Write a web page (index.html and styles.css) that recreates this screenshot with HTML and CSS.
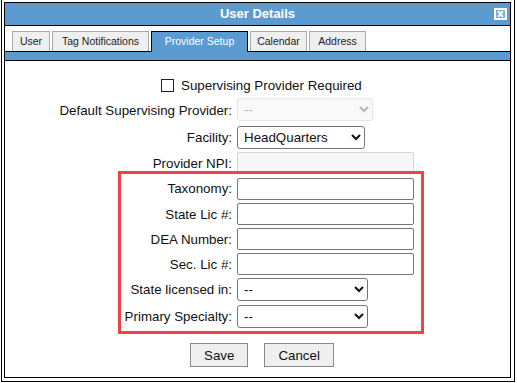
FILE: index.html
```html
<!DOCTYPE html>
<html lang="en">
<head>
    <meta charset="UTF-8">
    <title>User Details</title>
    <link rel="stylesheet" href="styles.css">
</head>
<body>
    <div class="frame">
        <div class="dialog">
            <div class="title-bar">
                <span class="title">User Details</span>
                <span class="close-btn">
                    <svg width="13" height="12" viewBox="0 0 13 12">
                        <rect x="1" y="1" width="11" height="10" fill="#7eb0dc" stroke="#fff" stroke-width="2"/>
                        <path d="M4.2 3.2 L8.8 8.8 M8.8 3.2 L4.2 8.8" stroke="#fff" stroke-width="2"/>
                    </svg>
                </span>
            </div>

            <ul class="tabs">
                <li class="tab tab-user">User</li>
                <li class="tab tab-wide">Tag Notifications</li>
                <li class="tab tab-wide active">Provider Setup</li>
                <li class="tab tab-mid">Calendar</li>
                <li class="tab tab-mid">Address</li>
            </ul>
            <div class="tab-strip"></div>

            <div class="panel">
                <form class="provider-form">
                    <label class="check-row">
                        <input type="checkbox" class="check">
                        <span>Supervising Provider Required</span>
                    </label>

                    <label class="field-label">Default Supervising Provider:</label>
                    <select class="control sel-default" disabled>
                        <option>--</option>
                    </select>

                    <label class="field-label">Facility:</label>
                    <select class="control sel-facility">
                        <option>HeadQuarters</option>
                    </select>

                    <label class="field-label">Provider NPI:</label>
                    <input type="text" class="control text-input" disabled>

                    <label class="field-label">Taxonomy:</label>
                    <input type="text" class="control text-input row-tax">

                    <label class="field-label">State Lic #:</label>
                    <input type="text" class="control text-input">

                    <label class="field-label">DEA Number:</label>
                    <input type="text" class="control text-input">

                    <label class="field-label">Sec. Lic #:</label>
                    <input type="text" class="control text-input">

                    <label class="field-label">State licensed in:</label>
                    <select class="control sel-short">
                        <option>--</option>
                    </select>

                    <label class="field-label">Primary Specialty:</label>
                    <select class="control sel-short sel-last">
                        <option>--</option>
                    </select>

                    <div class="actions">
                        <button type="button" class="btn">Save</button>
                        <button type="button" class="btn">Cancel</button>
                    </div>
                </form>
            </div>

            <!-- highlight drawn over the licence fields -->
            <div class="highlight"></div>
        </div>
    </div>
</body>
</html>
```

FILE: styles.css
```css
body {
    margin: 0;
    background-color: #fff;
    font-family: "Liberation Sans", Arial, sans-serif;
}
.frame {
    width: 507px;
    margin-left: 1px;
    padding: 2px 3px 3px 2px;
    border: 1px solid #000;
    border-top: none;
}
.dialog {
    position: relative;
    height: 374px;
    border: 1px solid #000;
    background-color: #fff;
}
.title-bar {
    position: relative;
    height: 22px;
    background-color: #5b9bd0;
    border-bottom: 1px solid #000;
    text-align: center;
}
.title {
    color: #fff;
    font-size: 13px;
    font-weight: bold;
    line-height: 22px;
}
.close-btn {
    position: absolute;
    right: 3px;
    top: 5px;
    line-height: 0;
}
.tabs {
    display: flex;
    gap: 2px;
    list-style: none;
    margin: 0;
    padding: 5px 0 0 7px;
    border-bottom: 1px solid #000;
}
.tab {
    box-sizing: border-box;
    height: 20px;
    border: 1px solid #aaa;
    border-bottom: none;
    background-color: #efefef;
    color: #222;
    font-size: 10.5px;
    line-height: 19px;
    text-align: center;
}
.tab-user {
    width: 38px;
}
.tab-wide {
    width: 97px;
}
.tab-mid {
    width: 57px;
}
.tab.active {
    height: 21px;
    margin-bottom: -1px;
    border-color: #000;
    background-color: #5b9bd0;
    color: #fff;
}
.tab-strip {
    height: 8px;
    background-color: #5b9bd0;
    border-bottom: 1px solid #000;
}
.panel {
    padding-top: 17px;
}
.provider-form {
    display: grid;
    grid-template-columns: 227px 177px;
    column-gap: 5px;
    row-gap: 3px;
    align-items: center;
    font-size: 13.33px;
    color: #111;
}
.check-row {
    grid-column: 1 / 3;
    display: flex;
    align-items: center;
    gap: 7px;
    height: 15px;
    margin: 0 0 2px 156px;
}
.check {
    appearance: none;
    width: 13px;
    height: 13px;
    margin: 0;
    border: 1px solid #222;
    background-color: #fff;
}
.field-label {
    text-align: right;
}
.control {
    box-sizing: border-box;
    margin: 0;
    font-family: "Liberation Sans", Arial, sans-serif;
    font-size: 13.33px;
    color: #111;
}
.text-input {
    width: 177px;
    height: 22px;
    border: 1px solid #767676;
    border-radius: 2px;
    padding: 0 4px;
    background-color: #fff;
}
.text-input:disabled {
    border-color: #d6d6d6;
    background-color: #f7f7f7;
}
select.control {
    height: 23px;
    border: 1px solid #767676;
    border-radius: 3px;
    padding: 0 2px;
    background-color: #fff;
}
select.control:disabled {
    border-color: #dcdcdc;
    background-color: #f7f7f7;
    color: #999;
}
.sel-default {
    width: 136px;
    margin-bottom: 2px;
}
.sel-facility {
    width: 128px;
}
.row-tax {
    margin-top: 1px;
}
.sel-short {
    width: 131px;
}
.sel-last {
    margin-top: 1px;
}
.actions {
    grid-column: 1 / 3;
    display: flex;
    gap: 16px;
    margin: 12px 0 0 185px;
}
.btn {
    padding: 0 13px;
    height: 24px;
    border: 1px solid #8a8a8a;
    border-radius: 0;
    background-color: #efefef;
    font-family: "Liberation Sans", Arial, sans-serif;
    font-size: 13.33px;
    color: #111;
}
.highlight {
    position: absolute;
    left: 113px;
    top: 168px;
    width: 300px;
    height: 157px;
    border: 3px solid #ee4348;
}
```
